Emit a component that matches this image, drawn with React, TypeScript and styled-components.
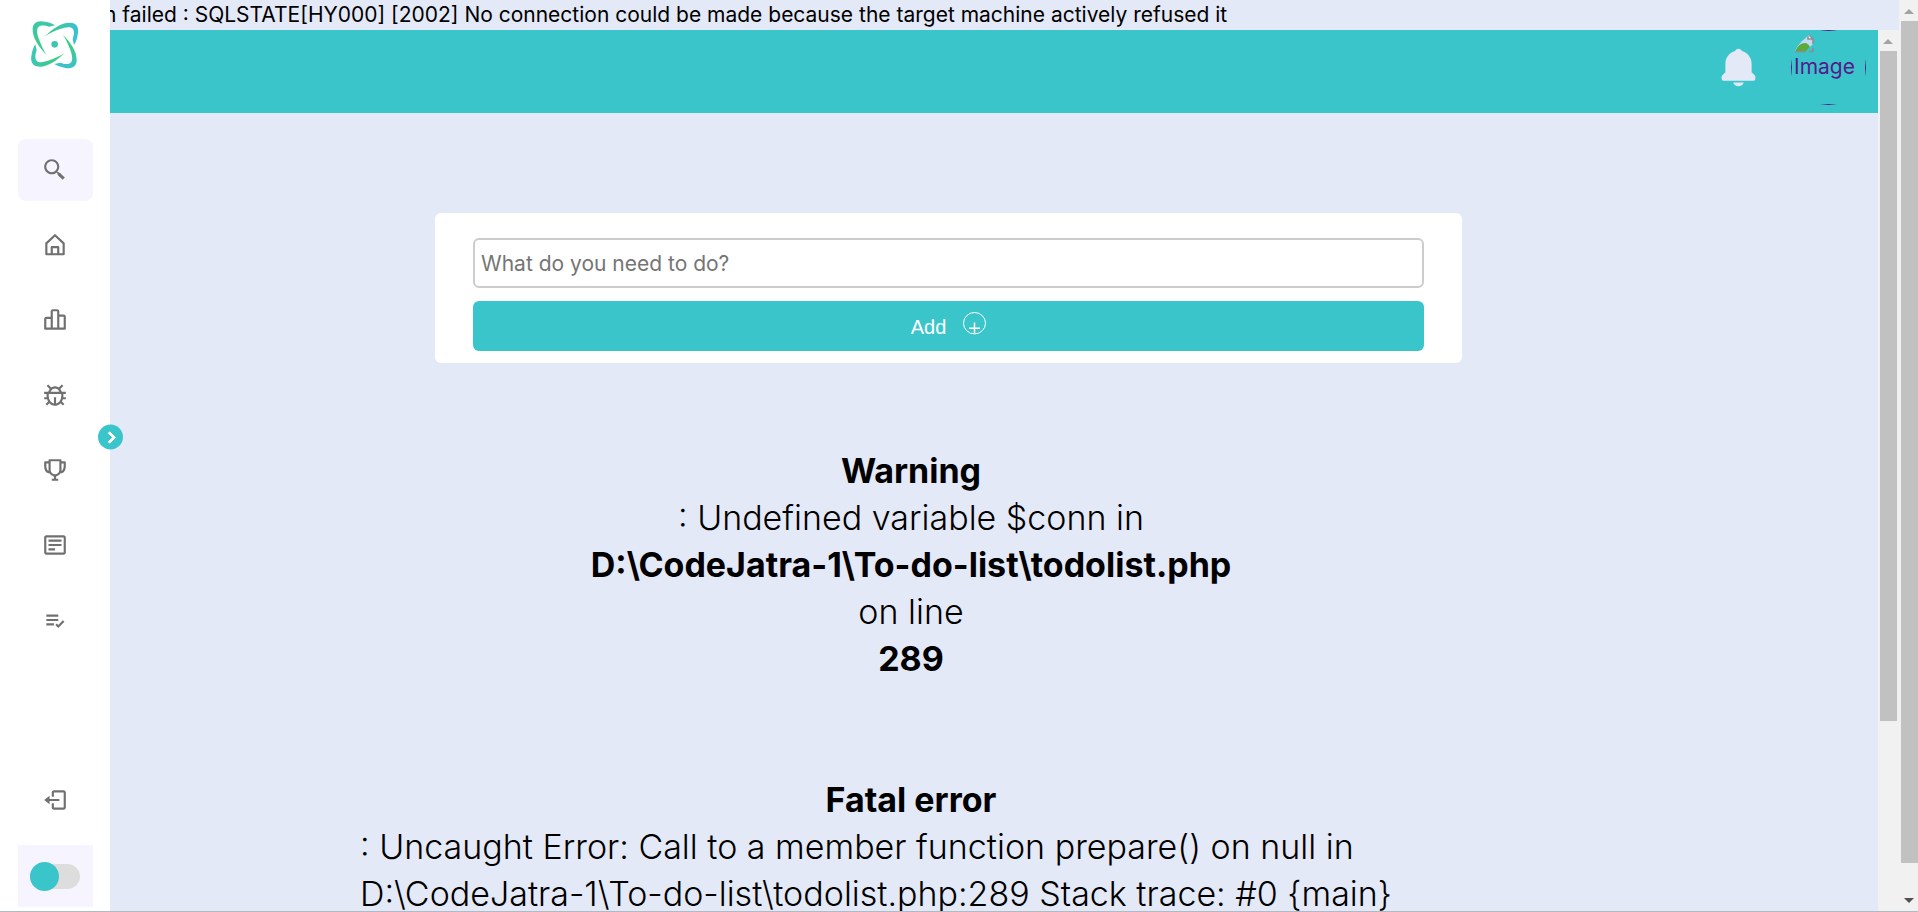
import React from "react";
import styled, { createGlobalStyle } from "styled-components";
import {
  BiSearchAlt2,
  BiBarChartAlt2,
  BiBug,
  BiTrophy,
  BiDetail,
  BiListCheck,
  BiLogOut,
  BiChevronRight,
  BiSolidBell,
} from "react-icons/bi";

const teal = "#3ac5cb";
const page = "#e3e9f7";
const tile = "#f6f5ff";
const iconGrey = "#707070";

const GlobalStyle = createGlobalStyle`
  *, *::before, *::after { box-sizing: border-box; }
  body {
    margin: 0;
    background: ${page};
    color: #000;
    font-family: Inter, "Open Sans", sans-serif;
    font-size: 21px;
    line-height: 30px;
  }
`;

const Shell = styled.div`
  display: grid;
  grid-template-columns: 110px minmax(0, 1fr) 19px;
  height: 100vh;
  overflow: hidden;
  border-bottom: 1px solid #b4b8c1;
`;

/* Sidebar */

const Sidebar = styled.nav`
  position: relative;
  z-index: 1;
  display: flex;
  flex-direction: column;
  padding: 10px 17px 4px 18px;
  background: #fff;
`;

const LogoLink = styled.a`
  display: block;
  width: 70px;
  height: 70px;
  margin-left: 2px;
`;

const NavList = styled.ul`
  display: flex;
  flex-direction: column;
  gap: 13px;
  margin: 59px 0 0;
  padding: 0;
  list-style: none;
`;

const NavLink = styled.a`
  display: flex;
  align-items: center;
  justify-content: center;
  height: 62px;
  padding-right: 1px;
  border-radius: 8px;
  color: ${iconGrey};
`;

const SearchButton = styled.button`
  display: flex;
  align-items: center;
  justify-content: center;
  width: 100%;
  height: 62px;
  padding: 0 1px 0 0;
  border: 0;
  border-radius: 8px;
  background: ${tile};
  color: ${iconGrey};
`;

const SidebarFooter = styled.div`
  display: flex;
  flex-direction: column;
  gap: 14px;
  margin-top: auto;
`;

const ModeTile = styled.label`
  display: flex;
  align-items: center;
  justify-content: center;
  height: 62px;
  padding-right: 1px;
  background: ${tile};
`;

const ModeSwitch = styled.input`
  position: relative;
  appearance: none;
  width: 50px;
  height: 25px;
  margin: 0;
  border-radius: 13px;
  background: #ddd;

  &::before {
    content: "";
    position: absolute;
    top: -2px;
    left: 0;
    width: 29px;
    height: 29px;
    border-radius: 50%;
    background: ${teal};
  }
`;

const ExpandButton = styled.button`
  position: absolute;
  top: 48%;
  right: -13px;
  display: flex;
  align-items: center;
  justify-content: center;
  width: 25px;
  height: 25px;
  padding: 0 0 0 1px;
  border: 0;
  border-radius: 50%;
  background: ${teal};
  color: #fff;
  transform: translateY(-50%);
`;

/* Main column */

const Main = styled.main`
  display: flex;
  flex-direction: column;
  min-width: 0;
  min-height: 0;
`;

const Notice = styled.p`
  flex: none;
  height: 30px;
  margin: 0;
  overflow: hidden;
  white-space: nowrap;
  text-indent: -6px;
`;

const Frame = styled.div`
  display: grid;
  grid-template-columns: minmax(0, 1fr) 21px;
  flex: 1;
  min-height: 0;
`;

const Pane = styled.div`
  min-width: 0;
  overflow: hidden;
`;

const TopBar = styled.header`
  display: flex;
  align-items: center;
  justify-content: flex-end;
  gap: 30px;
  padding: 0 12px 8px;
  background: ${teal};
`;

const BellButton = styled.button`
  display: flex;
  padding: 0;
  border: 0;
  background: none;
  color: ${page};
`;

const AvatarLink = styled.a`
  display: block;
  width: 75px;
  height: 75px;
  border-radius: 50%;
  overflow: hidden;
  color: #551a8b;
  text-decoration: none;
`;

const AvatarBox = styled.span`
  display: flex;
  flex-direction: column;
  height: 75px;
  padding: 2px 2px 0;
  border: 1px solid #551a8b;
  line-height: 28px;
  white-space: nowrap;
`;

const Content = styled.div`
  display: flex;
  flex-direction: column;
  margin: 100px 416px 0 250px;
`;

const TodoForm = styled.form`
  display: flex;
  flex-direction: column;
  gap: 13px;
  margin-left: 75px;
  padding: 25px 38px 12px;
  border-radius: 6px;
  background: #fff;
`;

const TodoInput = styled.input`
  width: 100%;
  height: 50px;
  padding: 0 6px;
  border: 2px solid #ccc;
  border-radius: 6px;
  font: inherit;
  color: #000;

  &::placeholder {
    color: #757575;
    opacity: 1;
  }
`;

const AddButton = styled.button`
  display: flex;
  align-items: center;
  justify-content: center;
  gap: 17px;
  height: 50px;
  padding: 2px 0 0;
  border: 0;
  border-radius: 6px;
  background: ${teal};
  color: #fff;
  font-family: "Liberation Sans", Arial, sans-serif;
  font-size: 20px;
`;

const Report = styled.section`
  display: flex;
  flex-direction: column;
  align-items: center;
  margin-top: 84px;
  font-size: 34px;
  font-weight: 300;
  line-height: 47px;

  & + & {
    margin-top: 94px;
  }
`;

const Strong = styled.b`
  font-weight: 700;
`;

const Trace = styled.span`
  width: 100%;
`;

/* Scroll bars */

const Track = styled.div`
  display: flex;
  flex-direction: column;
  padding-left: 2px;
  background: #f1f1f1;
  overflow: hidden;
`;

const Arrow = styled.svg`
  flex: none;
  width: 17px;
  height: 21px;
`;

const Thumb = styled.div<{ $share: number }>`
  flex: ${(p) => p.$share} 1 0;
  width: 17px;
  background: #c1c1c1;
`;

const Rest = styled.div<{ $share: number }>`
  flex: ${(p) => p.$share} 1 0;
`;

const arm =
  "M74 79 C98 56 124 38 148 38 C171 37 178 53 173 75 C171 87 168 96 162 105 L158 87 C162 75 164 63 158 56 C151 48 134 52 120 57 C104 63 88 70 74 79Z";
const arms = [
  { angle: 0, from: "#3cc99a", to: "#3bbfd4" },
  { angle: 90, from: "#3ccb84", to: "#3bc2cc" },
  { angle: 180, from: "#3ccb84", to: "#3cc6b8" },
  { angle: 270, from: "#3ccb8c", to: "#3cc8a8" },
];

function Logo() {
  return (
    <svg width="70" height="70" viewBox="0 0 210 210" aria-hidden="true">
      <defs>
        {arms.map((a) => (
          <linearGradient
            key={a.angle}
            id={`arm${a.angle}`}
            gradientUnits="userSpaceOnUse"
            x1="100"
            y1="70"
            x2="168"
            y2="84"
          >
            <stop offset="0" stopColor={a.from} />
            <stop offset="1" stopColor={a.to} />
          </linearGradient>
        ))}
      </defs>
      {arms.map((a) => (
        <path key={a.angle} d={arm} fill={`url(#arm${a.angle})`} transform={`rotate(${a.angle} 104 104)`} />
      ))}
      <circle cx="104" cy="103" r="10" fill="#3cc6b4" />
    </svg>
  );
}

function HomeIcon() {
  return (
    <svg width="26" height="26" viewBox="0 0 24 24" fill="none" stroke="currentColor" strokeWidth="2" strokeLinejoin="round" aria-hidden="true">
      <path d="M4 20.500V10.500L12 3l8 7.500V20.500Z" />
      <path d="M9 20.500V14h6v6.500" />
    </svg>
  );
}

function PlusRing() {
  return (
    <svg width="23" height="30" viewBox="0 0 23 30" fill="none" stroke="#fff" aria-hidden="true">
      <ellipse cx="11.500" cy="11.200" rx="11" ry="10.700" />
      <path d="M11.500 10.500v11M6 16.200h11" strokeWidth="1.500" />
    </svg>
  );
}

function BrokenImage() {
  return (
    <svg width="20" height="20" viewBox="0 0 20 20" aria-hidden="true">
      <path d="M1 1h13l5 5v6l-6 7H1z" fill="#c6d7f5" />
      <path d="M1 19c2-6 6-9 10-9 2 0 4 2 5 4l-4 5z" fill="#5bab3a" />
      <path d="M14 1v5h5z" fill="#fff" />
      <path d="M14 1v5h5M14 1l5 5v5M1 18.500h11M15 18.500h4V15" fill="none" stroke="#8d8d8d" strokeWidth="1.500" />
      <path d="M11 19l8-8v3l-5 5z" fill={teal} />
    </svg>
  );
}

function ScrollTrack({ thumb, rest, downArrow }: { thumb: number; rest: number; downArrow?: boolean }) {
  return (
    <Track aria-hidden="true">
      <Arrow viewBox="0 0 17 21">
        <path d="M8 9L13 14H3Z" fill="#a3a3a3" />
      </Arrow>
      <Thumb $share={thumb} />
      <Rest $share={rest} />
      {downArrow && (
        <Arrow viewBox="0 0 17 21">
          <path d="M3 8H13L8 13Z" fill="#505050" />
        </Arrow>
      )}
    </Track>
  );
}

const links = [
  { label: "Home", icon: <HomeIcon /> },
  { label: "Statistics", icon: <BiBarChartAlt2 size={26} /> },
  { label: "Issues", icon: <BiBug size={26} /> },
  { label: "Awards", icon: <BiTrophy size={26} /> },
  { label: "Notes", icon: <BiDetail size={26} /> },
  { label: "To-do list", icon: <BiListCheck size={26} /> },
];

export default function App() {
  return (
    <>
      <GlobalStyle />
      <Shell>
        <Sidebar>
          <LogoLink href="#" aria-label="Dashboard">
            <Logo />
          </LogoLink>
          <NavList>
            <li>
              <SearchButton type="button" aria-label="Search">
                <BiSearchAlt2 size={26} />
              </SearchButton>
            </li>
            {links.map((l) => (
              <li key={l.label}>
                <NavLink href="#" aria-label={l.label}>
                  {l.icon}
                </NavLink>
              </li>
            ))}
          </NavList>
          <SidebarFooter>
            <NavLink href="#" aria-label="Log out">
              <BiLogOut size={26} />
            </NavLink>
            <ModeTile>
              <ModeSwitch type="checkbox" aria-label="Dark mode" />
            </ModeTile>
          </SidebarFooter>
          <ExpandButton type="button" aria-label="Expand sidebar">
            <BiChevronRight size={26} stroke="currentColor" strokeWidth={1} />
          </ExpandButton>
        </Sidebar>

        <Main>
          <Notice>
            n failed : SQLSTATE[HY000] [2002] No connection could be made because the target machine actively refused it
          </Notice>
          <Frame>
            <Pane>
              <TopBar>
                <BellButton type="button" aria-label="Notifications">
                  <BiSolidBell size={45} />
                </BellButton>
                <AvatarLink href="#">
                  <AvatarBox>
                    <BrokenImage />
                    Image
                  </AvatarBox>
                </AvatarLink>
              </TopBar>
              <Content>
                <TodoForm>
                  <TodoInput type="text" aria-label="New task" placeholder="What do you need to do?" />
                  <AddButton type="button">
                    Add
                    <PlusRing />
                  </AddButton>
                </TodoForm>
                <Report>
                  <Strong>Warning</Strong>
                  <span>: Undefined variable $conn in</span>
                  <Strong>D:\CodeJatra-1\To-do-list\todolist.php</Strong>
                  <span>on line</span>
                  <Strong>289</Strong>
                </Report>
                <Report>
                  <Strong>Fatal error</Strong>
                  <Trace>
                    : Uncaught Error: Call to a member function prepare() on null in
                    D:\CodeJatra-1\To-do-list\todolist.php:289 Stack trace: #0 {"{main}"}
                  </Trace>
                </Report>
              </Content>
            </Pane>
            <ScrollTrack thumb={670} rest={190} />
          </Frame>
        </Main>

        <ScrollTrack thumb={842} rest={27} downArrow />
      </Shell>
    </>
  );
}
